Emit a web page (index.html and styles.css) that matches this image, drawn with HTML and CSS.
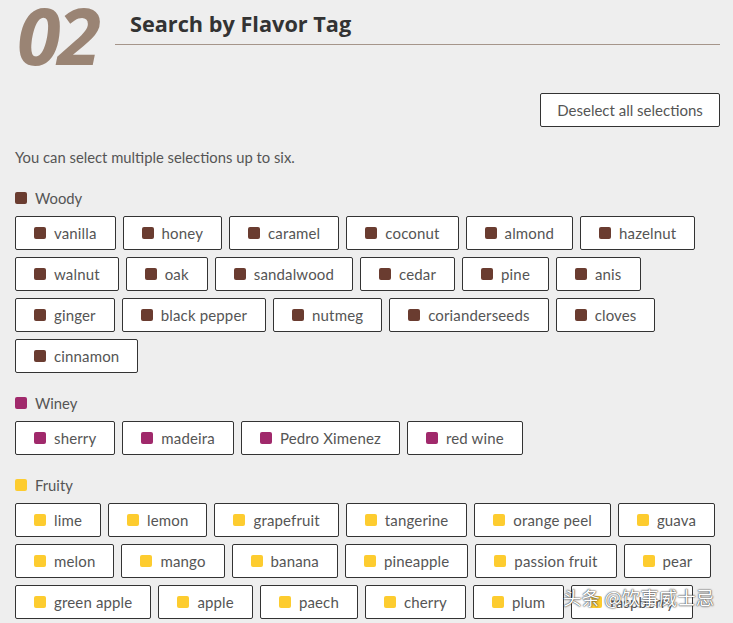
FILE: index.html
```html
<!DOCTYPE html>
<html lang="en">
<head>
<meta charset="utf-8">
<link rel="stylesheet" href="styles.css">
</head>
<body>
<div class="page">
  <header class="head">
    <div class="num">02</div>
    <h1 class="title">Search by Flavor Tag</h1>
  </header>
  <div class="actions"><button class="deselect">Deselect all selections</button></div>
  <p class="intro">You can select multiple selections up to six.</p>

  <section class="cat woody">
    <div class="label"><span class="sw"></span>Woody</div>
    <div class="tags">
      <div class="row">
        <span class="tag"><span class="sw"></span>vanilla</span>
        <span class="tag"><span class="sw"></span>honey</span>
        <span class="tag"><span class="sw"></span>caramel</span>
        <span class="tag"><span class="sw"></span>coconut</span>
        <span class="tag"><span class="sw"></span>almond</span>
        <span class="tag"><span class="sw"></span>hazelnut</span>
      </div>
      <div class="row">
        <span class="tag"><span class="sw"></span>walnut</span>
        <span class="tag"><span class="sw"></span>oak</span>
        <span class="tag"><span class="sw"></span>sandalwood</span>
        <span class="tag"><span class="sw"></span>cedar</span>
        <span class="tag"><span class="sw"></span>pine</span>
        <span class="tag"><span class="sw"></span>anis</span>
      </div>
      <div class="row">
        <span class="tag"><span class="sw"></span>ginger</span>
        <span class="tag"><span class="sw"></span>black pepper</span>
        <span class="tag"><span class="sw"></span>nutmeg</span>
        <span class="tag"><span class="sw"></span>corianderseeds</span>
        <span class="tag"><span class="sw"></span>cloves</span>
      </div>
      <div class="row">
        <span class="tag"><span class="sw"></span>cinnamon</span>
      </div>
    </div>
  </section>

  <section class="cat winey">
    <div class="label"><span class="sw"></span>Winey</div>
    <div class="tags">
      <div class="row">
        <span class="tag"><span class="sw"></span>sherry</span>
        <span class="tag"><span class="sw"></span>madeira</span>
        <span class="tag"><span class="sw"></span>Pedro Ximenez</span>
        <span class="tag"><span class="sw"></span>red wine</span>
      </div>
    </div>
  </section>

  <section class="cat fruity">
    <div class="label"><span class="sw"></span>Fruity</div>
    <div class="tags">
      <div class="row">
        <span class="tag"><span class="sw"></span>lime</span>
        <span class="tag"><span class="sw"></span>lemon</span>
        <span class="tag"><span class="sw"></span>grapefruit</span>
        <span class="tag"><span class="sw"></span>tangerine</span>
        <span class="tag"><span class="sw"></span>orange peel</span>
        <span class="tag"><span class="sw"></span>guava</span>
      </div>
      <div class="row">
        <span class="tag"><span class="sw"></span>melon</span>
        <span class="tag"><span class="sw"></span>mango</span>
        <span class="tag"><span class="sw"></span>banana</span>
        <span class="tag"><span class="sw"></span>pineapple</span>
        <span class="tag"><span class="sw"></span>passion fruit</span>
        <span class="tag"><span class="sw"></span>pear</span>
      </div>
      <div class="row">
        <span class="tag"><span class="sw"></span>green apple</span>
        <span class="tag"><span class="sw"></span>apple</span>
        <span class="tag"><span class="sw"></span>paech</span>
        <span class="tag"><span class="sw"></span>cherry</span>
        <span class="tag"><span class="sw"></span>plum</span>
        <span class="tag"><span class="sw"></span>raspberry</span>
      </div>
    </div>
  </section>
</div>
<div class="watermark">头条 @饮事威士忌</div>
</body>
</html>
```
FILE: styles.css
```css
html, body {
  margin: 0;
  padding: 0;
  background: #eeeeee;
  overflow: hidden;
  height: 623px;
}
body {
  font-family: "Lato", "Noto Sans", sans-serif;
  color: #555;
  position: relative;
}
.page {
  padding: 0 13px 0 15px;
}
.head {
  display: flex;
  align-items: flex-start;
  height: 76px;
}
.num {
  font-family: "Open Sans", sans-serif;
  font-weight: 700;
  font-style: italic;
  font-size: 79px;
  line-height: 70px;
  height: 70px;
  color: #9a8474;
  margin-left: 2px;
  letter-spacing: -3px;
  width: 98px;
  flex: none;
}
.title {
  flex: 1;
  margin: 0;
  font-family: "Open Sans", sans-serif;
  font-weight: 700;
  font-size: 21.7px;
  line-height: 30px;
  color: #333;
  padding: 9px 0 5px 15px;
  border-bottom: 1px solid #a5958a;
}
.actions {
  display: flex;
  justify-content: flex-end;
  margin-top: 17px;
}
.deselect {
  font-family: inherit;
  font-size: 15px;
  color: #555;
  background: #fff;
  border: 1px solid #333;
  border-radius: 2px;
  height: 34px;
  width: 180px;
  padding: 0;
}
.intro {
  margin: 21px 0 0;
  font-size: 14.8px;
  line-height: 18px;
}
.cat {
  margin-top: 23px;
}
.cat + .cat {
  margin-top: 21px;
}
.label {
  display: flex;
  align-items: center;
  height: 18px;
  font-size: 14.8px;
  margin-bottom: 9px;
}
.label .sw {
  margin-right: 8px;
}
.sw {
  display: inline-block;
  width: 12px;
  height: 12px;
  border-radius: 2px;
  flex: none;
}
.woody .sw { background: #6a3c30; }
.winey .sw { background: #a0296b; }
.fruity .sw { background: #fdcc2f; }
.tags {
  display: flex;
  flex-direction: column;
  gap: 7px;
}
.row {
  display: flex;
  gap: 7px;
  white-space: nowrap;
}
.tag {
  display: inline-flex;
  align-items: center;
  gap: 8px;
  height: 34px;
  box-sizing: border-box;
  padding: 0 18px 0 18px;
  background: #fff;
  border: 1px solid #333;
  border-radius: 2px;
  font-size: 15px;
  letter-spacing: 0.15px;
  color: #555;
}
.watermark {
  position: absolute;
  left: 563px;
  top: 584px;
  font-family: "Noto Sans CJK SC", sans-serif;
  font-size: 18.5px;
  color: #fff;
  text-shadow: 0 0 2px #333, 0 0 1px #333;
}
```
